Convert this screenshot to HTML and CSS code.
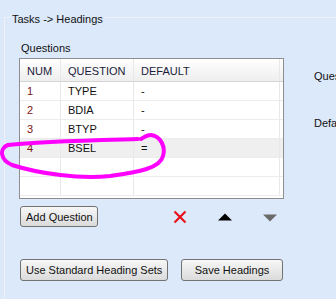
FILE: index.html
```html
<!DOCTYPE html>
<html lang="en">
<head>
  <meta charset="UTF-8" />
  <title>Tasks - Headings</title>
  <link rel="stylesheet" href="styles.css">
</head>
<body>
  <fieldset class="panel">
    <legend>Tasks -&gt; Headings</legend>
    <div class="layout">
      <div class="questions">
        <div class="label">Questions</div>
        <div class="grid">
          <div class="row head">
            <div class="cell">NUM</div>
            <div class="cell">QUESTION</div>
            <div class="cell">DEFAULT</div>
            <div class="cell"></div>
          </div>
          <div class="row">
            <div class="cell num">1</div>
            <div class="cell">TYPE</div>
            <div class="cell">-</div>
            <div class="cell"></div>
          </div>
          <div class="row">
            <div class="cell num">2</div>
            <div class="cell">BDIA</div>
            <div class="cell">-</div>
            <div class="cell"></div>
          </div>
          <div class="row">
            <div class="cell num">3</div>
            <div class="cell">BTYP</div>
            <div class="cell">-</div>
            <div class="cell"></div>
          </div>
          <div class="row selected">
            <div class="cell num">4</div>
            <div class="cell">BSEL</div>
            <div class="cell">=</div>
            <div class="cell"></div>
          </div>
          <div class="row">
            <div class="cell"></div><div class="cell"></div><div class="cell"></div><div class="cell"></div>
          </div>
          <div class="row">
            <div class="cell"></div><div class="cell"></div><div class="cell"></div><div class="cell"></div>
          </div>
        </div>

        <div class="tools">
          <button class="btn btn-add">Add Question</button>
          <div class="icons">
            <svg class="icon" width="14" height="14" viewBox="0 0 14 14">
              <path d="M1.5 1.5 L12.5 12.5 M12.5 1.5 L1.5 12.5" stroke="#e8101a" stroke-width="2.2" fill="none" />
            </svg>
            <svg class="icon" width="14" height="8" viewBox="0 0 14 8">
              <polygon points="7,0.5 14,7.5 0,7.5" fill="#000" />
            </svg>
            <svg class="icon down" width="14" height="8" viewBox="0 0 14 8">
              <polygon points="0,0.5 14,0.5 7,7.5" fill="#6a6a6a" />
            </svg>
          </div>
        </div>

        <div class="actions">
          <button class="btn btn-std">Use Standard Heading Sets</button>
          <button class="btn btn-save">Save Headings</button>
        </div>
      </div>

      <div class="fields">
        <div class="field">Question</div>
        <div class="field">Default</div>
      </div>
    </div>
  </fieldset>

  <svg class="scribble" width="336" height="299" viewBox="0 0 336 299">
    <path d="M138 139 C100 140 40 141 8 145 C-1 148 0 160 12 165 C40 174 80 179 110 176 C140 172 160 168 163 156 C166 146 160 136 151 135 C147 135 144 137 141 139"
          stroke="#ff00ff" stroke-width="4" fill="none" stroke-linecap="round" stroke-linejoin="round" />
  </svg>
</body>
</html>
```

FILE: styles.css
```css
body {
  margin: 0;
  background: #dce9fa;
  font-family: "Liberation Sans", Arial, sans-serif;
  font-size: 11px;
  color: #111;
  overflow: hidden;
  width: 336px;
  height: 299px;
  position: relative;
}
.panel {
  margin: 8px 0 0 4px;
  padding: 14px 0 0 14px;
  width: 420px;
  height: 320px;
  border: 1px solid #eef2f7;
  box-sizing: border-box;
}
.panel legend {
  margin-left: -9px;
  padding: 3px 2px 0;
  font-size: 11px;
  line-height: 16px;
  color: #111;
}
.layout {
  display: flex;
}
.questions {
  width: 265px;
}
.label {
  line-height: 14px;
  padding-left: 2px;
  margin-bottom: 3px;
}
.grid {
  height: 141px;
  border: 1px solid #8e8e8e;
  background: #fff;
  box-sizing: border-box;
  overflow: hidden;
}
.row {
  display: grid;
  grid-template-columns: 41px 73px 146px 1fr;
  height: 19px;
  border-bottom: 1px solid #ececec;
  box-sizing: border-box;
}
.row.head {
  height: 23px;
  background: linear-gradient(#ffffff, #eeeeee);
  border-bottom: 1px solid #d4d4d4;
  color: #1c1c3a;
}
.row.selected {
  background: #efefef;
}
.cell {
  border-right: 1px solid #e8e8e8;
  padding-left: 7px;
  display: flex;
  align-items: center;
  white-space: nowrap;
  overflow: hidden;
}
.cell:last-child {
  border-right: none;
  padding: 0;
}
.head .cell {
  padding-top: 1px;
}
.num {
  color: #7a1414;
}
.tools {
  display: flex;
  align-items: center;
  margin-top: 7px;
  padding-left: 1px;
}
.icons {
  display: flex;
  align-items: center;
  gap: 31px;
  margin-left: 75px;
}
.icon.down {
  margin-top: 2px;
}
.btn {
  height: 21px;
  padding: 0 5px;
  font-family: "Liberation Sans", Arial, sans-serif;
  font-size: 11px;
  color: #111;
  border: 1px solid #727272;
  border-radius: 3px;
  background: linear-gradient(#f7f7f7, #e9e9e9 50%, #dadada);
  box-sizing: border-box;
  white-space: nowrap;
}
.btn-add {
  width: 78px;
}
.actions {
  display: flex;
  gap: 13px;
  margin-top: 32px;
  padding-left: 1px;
}
.btn-std {
  width: 148px;
  height: 22px;
}
.btn-save {
  width: 102px;
  height: 22px;
}
.fields {
  margin-left: 30px;
  padding-top: 28px;
}
.field {
  line-height: 14px;
  margin-bottom: 33px;
  white-space: nowrap;
}
.scribble {
  position: absolute;
  left: 0;
  top: 0;
  pointer-events: none;
}
```
